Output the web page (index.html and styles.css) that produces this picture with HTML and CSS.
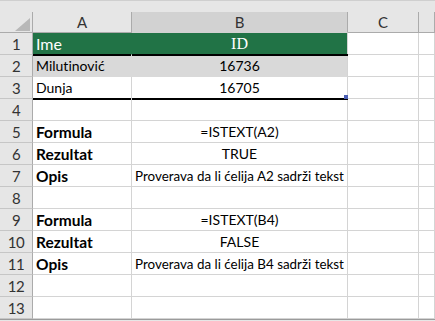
FILE: index.html
```html
<!DOCTYPE html>
<html>
<head>
<meta charset="utf-8">
<link rel="stylesheet" href="styles.css">
</head>
<body>
<div class="sheet">
  <div class="cell corner"><svg class="tri" width="15" height="13" viewBox="0 0 15 13"><polygon points="15,0 15,13 0,13" fill="#b8b8b8"/></svg></div>
  <div class="cell colhead">A</div>
  <div class="cell colhead sel">B</div>
  <div class="cell colhead">C</div>
  <div class="cell colhead"></div>

  <div class="cell rowhead">1</div>
  <div class="cell a green thick big">Ime</div>
  <div class="cell b green thick id">ID</div>
  <div class="cell"></div><div class="cell"></div>

  <div class="cell rowhead">2</div>
  <div class="cell a band data">Milutinović</div>
  <div class="cell b band data">16736</div>
  <div class="cell"></div><div class="cell"></div>

  <div class="cell rowhead">3</div>
  <div class="cell a thick data">Dunja</div>
  <div class="cell b thick handle data">16705</div>
  <div class="cell"></div><div class="cell"></div>

  <div class="cell rowhead">4</div>
  <div class="cell"></div><div class="cell"></div><div class="cell"></div><div class="cell"></div>

  <div class="cell rowhead">5</div>
  <div class="cell a label">Formula</div>
  <div class="cell b small">=ISTEXT(A2)</div>
  <div class="cell"></div><div class="cell"></div>

  <div class="cell rowhead">6</div>
  <div class="cell a label">Rezultat</div>
  <div class="cell b small">TRUE</div>
  <div class="cell"></div><div class="cell"></div>

  <div class="cell rowhead">7</div>
  <div class="cell a label">Opis</div>
  <div class="cell b small desc">Proverava da li ćelija A2 sadrži tekst</div>
  <div class="cell"></div><div class="cell"></div>

  <div class="cell rowhead">8</div>
  <div class="cell"></div><div class="cell"></div><div class="cell"></div><div class="cell"></div>

  <div class="cell rowhead">9</div>
  <div class="cell a label">Formula</div>
  <div class="cell b small">=ISTEXT(B4)</div>
  <div class="cell"></div><div class="cell"></div>

  <div class="cell rowhead">10</div>
  <div class="cell a label">Rezultat</div>
  <div class="cell b small">FALSE</div>
  <div class="cell"></div><div class="cell"></div>

  <div class="cell rowhead">11</div>
  <div class="cell a label">Opis</div>
  <div class="cell b small desc">Proverava da li ćelija B4 sadrži tekst</div>
  <div class="cell"></div><div class="cell"></div>

  <div class="cell rowhead">12</div>
  <div class="cell"></div><div class="cell"></div><div class="cell"></div><div class="cell"></div>

  <div class="cell rowhead">13</div>
  <div class="cell"></div><div class="cell"></div><div class="cell"></div><div class="cell"></div>
</div>
</body>
</html>
```

FILE: styles.css
```css
html, body {
  margin: 0;
  padding: 0;
  width: 435px;
  height: 321px;
  overflow: hidden;
  background: #e6e6e6;
}

body {
  border-top: 1px solid #cfcfcf;
  box-sizing: border-box;
  padding-top: 11px;
  font-family: Lato, "Liberation Sans", sans-serif;
  color: #000;
}

.sheet {
  display: grid;
  grid-template-columns: 33px 99px 216px 71px 16px;
  grid-template-rows: 21px repeat(13, 22px);
  background: #fff;
  border-bottom: 1px solid #9b9b9b;
}

.cell {
  box-sizing: border-box;
  border-right: 1px solid #d4d4d4;
  border-bottom: 1px solid #d4d4d4;
  position: relative;
  display: flex;
  align-items: center;
  white-space: nowrap;
  font-size: 15px;
  background: #fff;
  font-variant-ligatures: none;
}

.corner {
  background: #e6e6e6;
  border-right: 1px solid #ababab;
  border-bottom: 1px solid #ababab;
}

.tri {
  margin-left: 15px;
  margin-top: 4px;
}

.colhead {
  background: #e6e6e6;
  border-right: 1px solid #ababab;
  border-bottom: 1px solid #ababab;
  justify-content: center;
  color: #333;
  font-size: 15px;
}

.colhead.sel {
  background: #d2d2d2;
  border-bottom-color: #d2d2d2;
}

.rowhead {
  background: #e6e6e6;
  border-right: 1px solid #ababab;
  border-bottom: 1px solid #c6c6c6;
  justify-content: center;
  color: #333;
  font-size: 15px;
  letter-spacing: -0.5px;
}

.a {
  padding-left: 3px;
}

.b {
  justify-content: center;
}

.green {
  background: #217346;
  color: #fff;
  border-right-color: #217346;
}

.green.b {
  border-right-color: #d4d4d4;
}

.big {
  font-size: 16px;
}

.id {
  font-family: "Liberation Serif", "DejaVu Serif", serif;
  font-size: 16px;
}

.data {
  font-size: 14px;
}

.band {
  background: #d9d9d9;
  border-bottom-color: #d9d9d9;
}

.band.a {
  border-right-color: #d9d9d9;
}

.thick::after {
  content: "";
  position: absolute;
  left: 0;
  right: -1px;
  bottom: -2px;
  height: 2px;
  background: #000;
  z-index: 1;
}

.a.thick::after {
  left: 0;
  right: 0;
}

.handle::before {
  content: "";
  position: absolute;
  right: -1px;
  bottom: -1px;
  width: 4px;
  height: 4px;
  background: #4b5fb4;
  z-index: 2;
}

.label {
  font-weight: bold;
  font-size: 15.5px;
}

.small {
  font-size: 14px;
}

.desc {
  font-size: 13.4px;
}
```
